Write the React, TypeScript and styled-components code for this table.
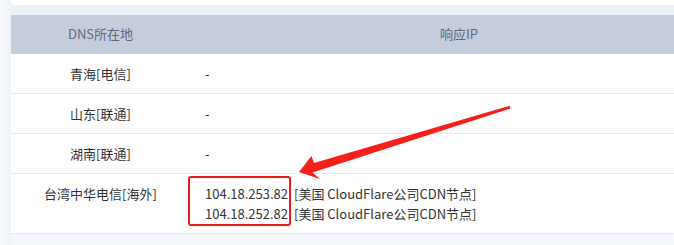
import React from "react";
import styled, { createGlobalStyle } from "styled-components";

const GlobalStyle = createGlobalStyle`
  html, body {
    margin: 0;
    padding: 0;
    overflow: hidden;
  }
  body {
    width: 674px;
    height: 245px;
    background: #f5f8fb;
    font-family: "Noto Sans CJK SC", "Noto Sans", sans-serif;
  }
`;

const Page = styled.div`
  position: relative;
  display: flex;
  width: 674px;
  height: 245px;
  overflow: hidden;
`;

const SideStrip = styled.div`
  flex: 0 0 11px;
  background: linear-gradient(90deg, #f7f9fc 0%, #eef3f9 100%);
`;

const Main = styled.div`
  flex: 1;
  display: flex;
  flex-direction: column;
  background: linear-gradient(180deg, #edf2f8 0%, #f4f7fb 100%);
`;

const TopCard = styled.div`
  height: 5px;
  background: #ffffff;
  border-radius: 0 0 4px 4px;
  margin-bottom: 10px;
`;

const Table = styled.div`
  width: 717px;
  background: #ffffff;
  font-size: 13px;
  color: #333333;
`;

const Row = styled.div<{ $head?: boolean }>`
  display: grid;
  grid-template-columns: 179px 1fr;
  background: ${(p) => (p.$head ? "#c5ccdb" : "#ffffff")};
  color: ${(p) => (p.$head ? "#5f6985" : "#333333")};
  border-bottom: 1px solid ${(p) => (p.$head ? "#c5ccdb" : "#e5e7eb")};
  min-height: ${(p) => (p.$head ? "38px" : "39px")};
`;

const Cell = styled.div<{ $align?: "center" | "left"; $tight?: boolean }>`
  text-align: ${(p) => p.$align ?? "center"};
  line-height: 20px;
  padding: ${(p) => (p.$tight ? "2px 0 7px 15px" : p.$align === "left" ? "10px 0 9px 15px" : "10px 0 9px")};
  display: ${(p) => (p.$tight ? "flex" : "block")};
  align-items: flex-start;
`;

const HeadCell = styled.div`
  text-align: center;
  line-height: 38px;
`;

const IpBox = styled.div`
  margin-left: -17px;
  padding: 6px 1px 0 15px;
  border: 2px solid #ef1a1a;
  border-radius: 3px;
  text-align: right;
`;

const Desc = styled.div`
  margin-top: 8px;
  margin-left: 3px;
`;

const Arrow = styled.svg`
  position: absolute;
  left: 0;
  top: 0;
  pointer-events: none;
`;

const rows = [
  { where: "青海[电信]", ip: "-" },
  { where: "山东[联通]", ip: "-" },
  { where: "湖南[联通]", ip: "-" },
];

const ips = ["104.18.253.82", "104.18.252.82"];

export default function App() {
  return (
    <>
      <GlobalStyle />
      <Page>
        <SideStrip />
        <Main>
          <TopCard />
          <Table>
            <Row $head>
              <HeadCell>DNS所在地</HeadCell>
              <HeadCell>响应IP</HeadCell>
            </Row>
            {rows.map((r) => (
              <Row key={r.where}>
                <Cell>{r.where}</Cell>
                <Cell $align="left">{r.ip}</Cell>
              </Row>
            ))}
            <Row>
              <Cell>台湾中华电信[海外]</Cell>
              <Cell $tight>
                <IpBox>
                  {ips.map((ip) => (
                    <div key={ip}>{ip}</div>
                  ))}
                </IpBox>
                <Desc>
                  {ips.map((ip) => (
                    <div key={ip}>[美国 CloudFlare公司CDN节点]</div>
                  ))}
                </Desc>
              </Cell>
            </Row>
          </Table>
        </Main>
        <Arrow width="674" height="245" viewBox="0 0 674 245">
          <polygon
            fill="#f5201a"
            points="299,172 311.5,156 314,163 509.6,105.8 510.4,108.4 312.5,172.5 320,179"
          />
        </Arrow>
      </Page>
    </>
  );
}
